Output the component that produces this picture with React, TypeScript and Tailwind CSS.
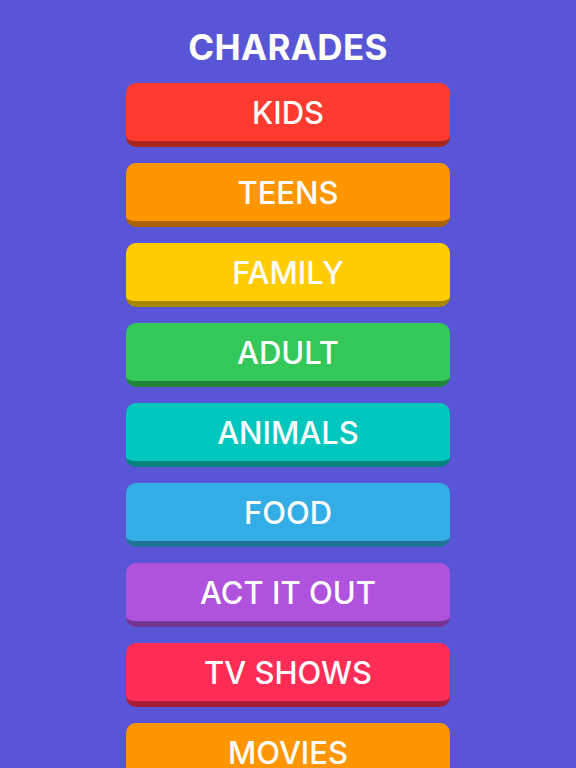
import React from "react";

const items: { label: string; cls: string }[] = [
  { label: "KIDS", cls: "bg-[#ff3b30] border-[#a72720]" },
  { label: "TEENS", cls: "bg-[#ff9500] border-[#a86200]" },
  { label: "FAMILY", cls: "bg-[#ffcc00] border-[#a88600]" },
  { label: "ADULT", cls: "bg-[#34c759] border-[#22833b]" },
  { label: "ANIMALS", cls: "bg-[#00c7be] border-[#00837d]" },
  { label: "FOOD", cls: "bg-[#32ade6] border-[#217298]" },
  { label: "ACT IT OUT", cls: "bg-[#af52de] border-[#733692]" },
  { label: "TV SHOWS", cls: "bg-[#ff2d55] border-[#a81e38]" },
  { label: "MOVIES", cls: "bg-[#ff9500] border-[#a86200]" },
];

export default function App() {
  return (
    <div
      className="w-[576px] h-[768px] overflow-hidden bg-[#5856d6] flex flex-col items-center"
      style={{ fontFamily: "Inter, 'Noto Sans', sans-serif" }}
    >
      <h1 className="mt-[27px] h-[40px] text-[35px] leading-[40px] font-bold text-white tracking-[0.01em]">
        CHARADES
      </h1>
      <div className="mt-[16px] flex flex-col gap-4">
        {items.map((it) => (
          <div
            key={it.label}
            className={`w-[324px] h-[64px] shrink-0 rounded-[10px] border-b-[6px] flex items-center justify-center ${it.cls}`}
          >
            <span className="text-[31px] font-medium text-white leading-none mt-[1px]">{it.label}</span>
          </div>
        ))}
      </div>
    </div>
  );
}
